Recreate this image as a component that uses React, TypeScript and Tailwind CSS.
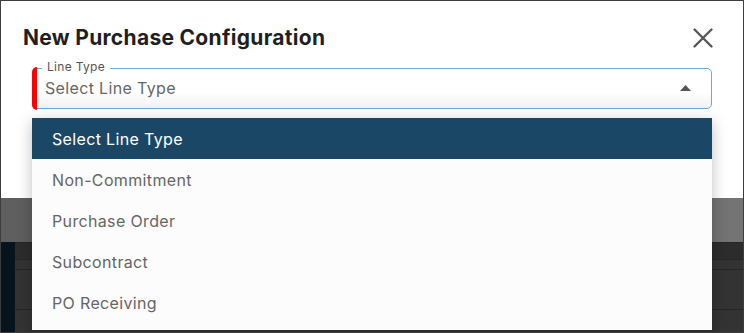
const options = ['Select Line Type', 'Non-Commitment', 'Purchase Order', 'Subcontract', 'PO Receiving'];

export default function App() {
  return (
    <div
      className="relative w-[744px] h-[333px] overflow-hidden border border-[#3d3d3d] bg-[#2e2e2e]"
      style={{ fontFamily: 'Inter, "Noto Sans", sans-serif' }}
    >
      {/* modal */}
      <div className="h-[197px] bg-white">
        <div className="flex items-center justify-between pl-[22px] pr-[31px] pt-[23px]">
          <h1 className="text-[21px] leading-[28px] font-bold text-[#1f1f1f] tracking-[0.3px]">
            New Purchase Configuration
          </h1>
          <svg width="20" height="20" viewBox="0 0 20 20" className="mr-[-1px]">
            <path d="M1.5 1.5 L18.5 18.5 M18.5 1.5 L1.5 18.5" stroke="#555" strokeWidth="2.3" strokeLinecap="round" />
          </svg>
        </div>

        {/* select field */}
        <div className="relative mt-[16px] ml-[31px] mr-[31px] h-[41px]">
          <div className="absolute inset-0 rounded-[5px] border border-[#64abe3] bg-gradient-to-b from-white from-60% to-[#f1f1f1]" />
          <div className="absolute left-0 top-[-1px] bottom-[-1px] w-[5px] rounded-l-[5px] bg-[#ff0000]" />
          <span className="absolute left-[10px] top-[-8px] bg-white px-[5px] text-[12px] leading-[14px] tracking-[0.3px] text-[#555]">
            Line Type
          </span>
          <div className="relative flex h-full items-center justify-between pl-[13px] pr-[21px] pb-[1px]">
            <span className="text-[16px] tracking-[0.35px] text-[#666]">Select Line Type</span>
            <svg width="11" height="6" viewBox="0 0 11 6">
              <path d="M0 6 L5.5 0 L11 6 Z" fill="#555" />
            </svg>
          </div>
        </div>
      </div>

      {/* page behind the modal */}
      <div className="h-[44px] bg-gradient-to-r from-[#5e5e5e] to-[#747474]" />
      <div className="flex h-[92px]">
        <div className="w-[14px] bg-[#07131d]" />
        <div className="flex-1 bg-[#333] border-t border-[#262626]">
          <div className="h-[17px] border-b border-[#262626] bg-[#2c2c2c]" />
          <div className="h-[10px] border-b border-[#262626]" />
          <div className="h-[40px] border-b border-[#262626]" />
        </div>
      </div>

      {/* dropdown menu */}
      <ul className="absolute left-[31px] top-[117px] w-[680px] bg-[#fcfcfc] pb-[7px] shadow-[0_4px_14px_rgba(0,0,0,0.25)]">
        {options.map((o, i) => (
          <li
            key={o}
            className={
              i === 0
                ? 'h-[41px] flex items-center pl-[20px] text-[16px] tracking-[0.35px] bg-[#1b4766] text-white'
                : 'h-[41px] flex items-center pl-[20px] text-[16px] tracking-[0.35px] text-[#666]'
            }
          >
            {o}
          </li>
        ))}
      </ul>
    </div>
  );
}
